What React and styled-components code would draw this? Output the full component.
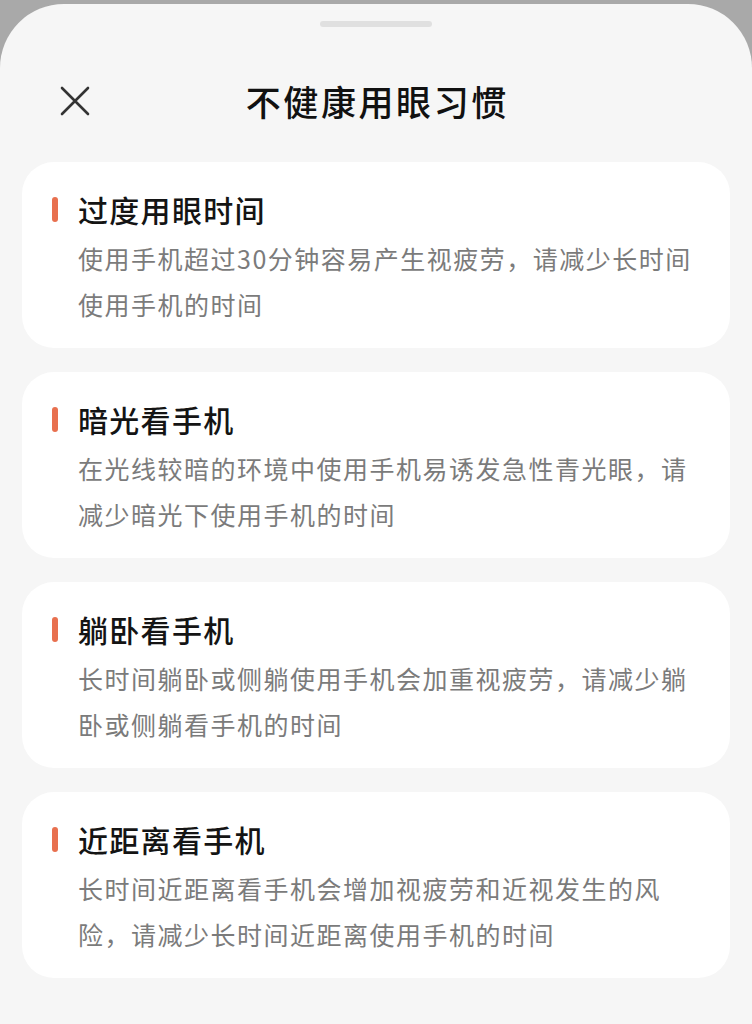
import React from "react";
import styled, { createGlobalStyle } from "styled-components";

const Global = createGlobalStyle`
  html, body { margin: 0; padding: 0; background: #a9a9a9; }
  body { font-family: "Noto Sans CJK SC", "Noto Sans", sans-serif; -webkit-font-smoothing: antialiased; }
  * { box-sizing: border-box; }
`;

const Screen = styled.div`
  width: 752px;
  height: 1024px;
  padding-top: 4px;
  overflow: hidden;
`;

const Sheet = styled.div`
  height: 1020px;
  background: #f6f6f6;
  border-radius: 64px 64px 0 0;
  padding: 17px 22px 0;
  display: flex;
  flex-direction: column;
`;

const Handle = styled.div`
  align-self: center;
  width: 112px;
  height: 6px;
  border-radius: 3px;
  background: #e0e0e0;
`;

const Header = styled.div`
  margin-top: 42px;
  height: 64px;
  display: grid;
  grid-template-columns: 1fr auto 1fr;
  align-items: center;
  padding: 0 38px;
`;

const CloseButton = styled.button`
  justify-self: start;
  width: 30px;
  height: 30px;
  padding: 0;
  border: none;
  background: transparent;
  display: flex;
  align-items: center;
  justify-content: center;
  cursor: pointer;
`;

const Title = styled.h1`
  margin: 0;
  font-size: 35px;
  font-weight: 500;
  letter-spacing: 2.6px;
  line-height: 44px;
  color: #111;
  padding-left: 2.6px;
`;

const List = styled.div`
  margin-top: 29px;
  display: flex;
  flex-direction: column;
  gap: 24px;
`;

const Card = styled.section`
  background: #fff;
  border-radius: 32px;
  padding: 25px 30px 21px 30px;
  display: flex;
  flex-direction: column;
  gap: 4px;
`;

const CardHead = styled.div`
  display: flex;
  align-items: center;
  gap: 20px;
  height: 44px;
`;

const Marker = styled.span`
  width: 6px;
  height: 25px;
  border-radius: 3px;
  background: #e8704f;
  flex: none;
`;

const CardTitle = styled.h2`
  margin: 0;
  font-size: 30px;
  font-weight: 500;
  letter-spacing: 1.3px;
  line-height: 44px;
  color: #141414;
`;

const CardText = styled.p`
  margin: 0 0 0 26px;
  font-size: 25px;
  letter-spacing: 1.5px;
  line-height: 46px;
  color: #7b7b7b;
`;

const items = [
  {
    title: "过度用眼时间",
    text: "使用手机超过30分钟容易产生视疲劳，请减少长时间使用手机的时间",
  },
  {
    title: "暗光看手机",
    text: "在光线较暗的环境中使用手机易诱发急性青光眼，请减少暗光下使用手机的时间",
  },
  {
    title: "躺卧看手机",
    text: "长时间躺卧或侧躺使用手机会加重视疲劳，请减少躺卧或侧躺看手机的时间",
  },
  {
    title: "近距离看手机",
    text: "长时间近距离看手机会增加视疲劳和近视发生的风险，请减少长时间近距离使用手机的时间",
  },
];

export default function App() {
  return (
    <Screen>
      <Global />
      <Sheet>
        <Handle />
        <Header>
          <CloseButton aria-label="关闭">
            <svg width="30" height="30" viewBox="0 0 30 30">
              <path d="M2 2 L28 28 M28 2 L2 28" stroke="#333" strokeWidth="2.6" strokeLinecap="round" fill="none" />
            </svg>
          </CloseButton>
          <Title>不健康用眼习惯</Title>
          <span />
        </Header>
        <List>
          {items.map((it) => (
            <Card key={it.title}>
              <CardHead>
                <Marker />
                <CardTitle>{it.title}</CardTitle>
              </CardHead>
              <CardText>{it.text}</CardText>
            </Card>
          ))}
        </List>
      </Sheet>
    </Screen>
  );
}
